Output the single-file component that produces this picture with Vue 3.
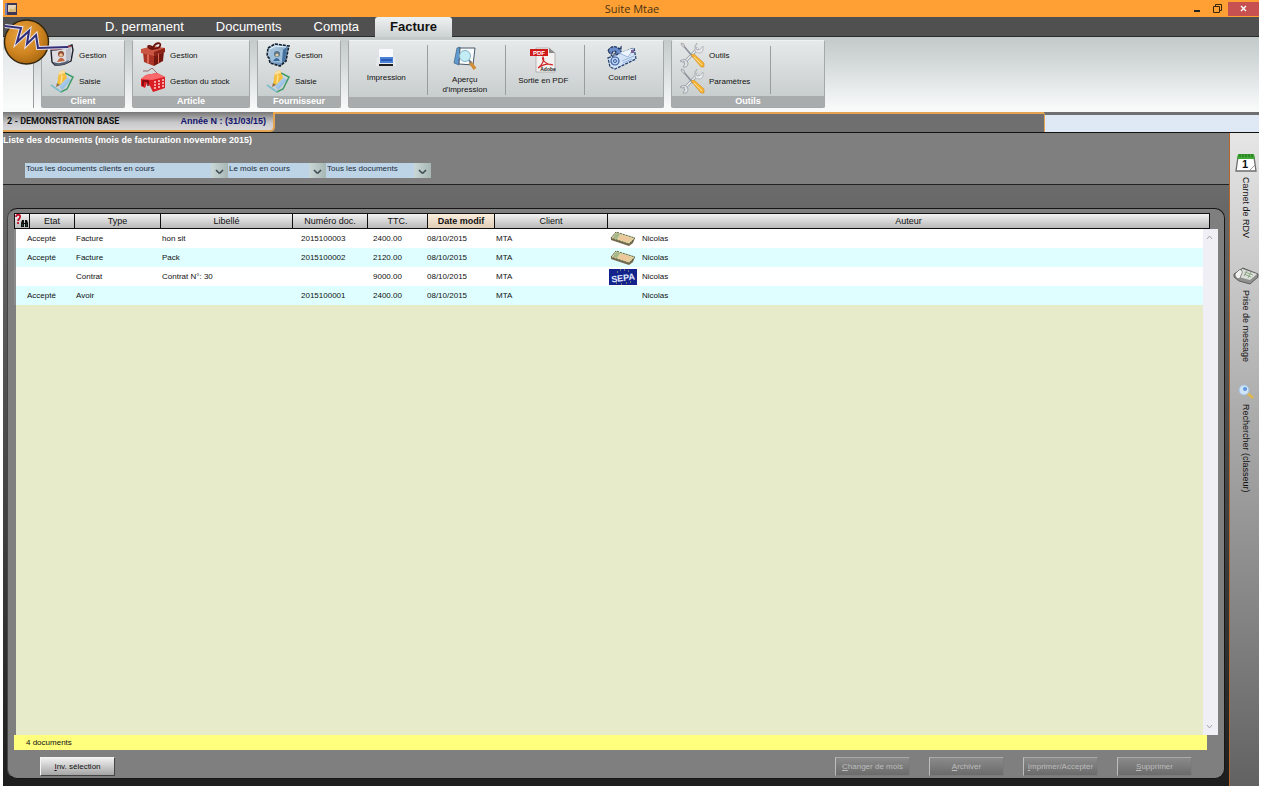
<script setup>
import { ref } from 'vue'

const tabs = ['D. permanent', 'Documents', 'Compta', 'Facture']
const activeTab = ref('Facture')

const smallGroups = [
  { title: 'Client', size: 'g-client', items: [{ icon: 'card', label: 'Gestion' }, { icon: 'pencil', label: 'Saisie' }] },
  { title: 'Article', size: 'g-article', items: [{ icon: 'gift', label: 'Gestion' }, { icon: 'stock', label: 'Gestion du stock' }] },
  { title: 'Fournisseur', size: 'g-client', items: [{ icon: 'safe', label: 'Gestion' }, { icon: 'pencil', label: 'Saisie' }] }
]

const filters = [
  { id: 'f-docs', size: 'w-docs', name: 'Clients', value: 'Tous les documents clients en cours' },
  { id: 'f-month', size: 'w-month', name: 'Période', value: 'Le mois en cours' },
  { id: 'f-type', size: 'w-type', name: 'Type de document', value: 'Tous les documents' }
]

const rows = [
  { etat: 'Accepté', type: 'Facture', lib: 'hon sit', num: '2015100003', ttc: '2400.00', date: '08/10/2015', client: 'MTA', pic: 'note', auteur: 'Nicolas' },
  { etat: 'Accepté', type: 'Facture', lib: 'Pack', num: '2015100002', ttc: '2120.00', date: '08/10/2015', client: 'MTA', pic: 'note', auteur: 'Nicolas' },
  { etat: '', type: 'Contrat', lib: 'Contrat N°: 30', num: '', ttc: '9000.00', date: '08/10/2015', client: 'MTA', pic: 'sepa', auteur: 'Nicolas' },
  { etat: 'Accepté', type: 'Avoir', lib: '', num: '2015100001', ttc: '2400.00', date: '08/10/2015', client: 'MTA', pic: '', auteur: 'Nicolas' }
]

const actions = [
  { key: 'C', rest: 'hanger de mois' },
  { key: 'A', rest: 'rchiver' },
  { key: 'I', rest: 'mprimer/Accepter' },
  { key: 'S', rest: 'upprimer' }
]
</script>

<template>
  <div class="window">
    <svg class="defs" width="0" height="0" aria-hidden="true">
      <defs>
        <radialGradient id="gold" cx="0.4" cy="0.35" r="0.7">
          <stop offset="0" stop-color="#e9a744" /><stop offset="0.6" stop-color="#cf8420" /><stop offset="1" stop-color="#a5650f" />
        </radialGradient>
        <linearGradient id="paper" x1="0" y1="0" x2="1" y2="1">
          <stop offset="0" stop-color="#e8f3fb" /><stop offset="1" stop-color="#6da6dd" />
        </linearGradient>
        <linearGradient id="steel" x1="0" y1="0" x2="1" y2="1">
          <stop offset="0" stop-color="#cfe4f2" /><stop offset="1" stop-color="#4a78a8" />
        </linearGradient>
        <symbol id="i-card" viewBox="0 0 26 26">
          <path d="M2 8 Q12 8 23 3 L24 8 L22 19 Q14 24 6 23 L3 20Z" fill="#dedde2" stroke="#22222c" stroke-width="1.4" />
          <path d="M17 7 L22 5 L22 17 L17 20Z" fill="#b9bec9" />
          <path d="M2 7 Q12 8 22 4" fill="none" stroke="#a8424a" stroke-width="1.4" />
          <circle cx="12" cy="12" r="3" fill="#8e4a2d" /><circle cx="12" cy="13" r="1.8" fill="#edc39d" />
          <path d="M8 20 Q12 12 16 19 Z" fill="#c0683f" /><path d="M4 20 Q12 23 20 18 L19 21 Q12 24 6 23Z" fill="#566074" />
        </symbol>
        <symbol id="i-safe" viewBox="0 0 26 26">
          <path d="M3 6 L10 2 L24 4 L23 8 L21 19 L15 24 L5 21 L4 16 L2 14Z" fill="url(#steel)" stroke="#14202f" stroke-width="1.6" stroke-dasharray="3 1" />
          <path d="M5 7 L18 8 L17 21 L6 19Z" fill="#9fc0da" />
          <path d="M18 8 L22 5 L20 18 L17 21Z" fill="#456f9c" />
          <circle cx="12" cy="12" r="3" fill="#5b7288" /><circle cx="12" cy="13" r="1.600" fill="#e1d0a0" />
          <path d="M8 19 Q12 13 15 19Z" fill="#3b6899" /><path d="M5 7 L10 4 L21 5" stroke="#e7f7ff" fill="none" />
        </symbol>
        <symbol id="i-pencil" viewBox="0 0 26 26">
          <path d="M6 13 L16 7 L22 12 L13 22Z" fill="url(#paper)" />
          <path d="M16 5 L24 9 L18 21 L12 24 L2 17" fill="none" stroke="#3f9b66" stroke-width="1.5" />
          <path d="M2 17 L12 24" stroke="#88c6e4" stroke-width="1.500" />
          <path d="M10 4 L15 2 L18 10 L11 17 L8 16Z" fill="#f6bd3c" /><path d="M10 4 L15 2 L16 5 L10 7Z" fill="#f7dfa0" />
          <path d="M13 7 L12 15" stroke="#fbe08c" stroke-width="1.6" /><path d="M8 15 L11 17 L7 19Z" fill="#8d7248" />
        </symbol>
        <symbol id="i-gift" viewBox="0 0 26 26">
          <path d="M3 10 L14 13 L14 24 L4 20Z" fill="#a93425" /><path d="M14 13 L24 9 L23 19 L14 24Z" fill="#74180f" />
          <path d="M1 7 L13 4 L25 6 L25 10 L14 14 L1 11Z" fill="#c95542" /><path d="M14 10 L25 6 L25 10 L14 14Z" fill="#8b2417" />
          <path d="M7 12 L9 13 L9 22 L7 21Z M18 12 L19 11 L19 21 L18 22Z" fill="#dd6a55" />
          <path d="M13 7 C5 6 8 1 13 6 C15 0 22 0 20 4 C19 7 16 6 13 7Z" fill="none" stroke="#6a120c" stroke-width="1.800" />
        </symbol>
        <symbol id="i-stock" viewBox="0 0 26 26">
          <path d="M3 3 L8 3 L12 0 L18 6" fill="none" stroke="#96686b" />
          <path d="M1 11 L6 7 L17 5 L25 9 L25 20 L13 24 L10 18 L7 15 L5 20 L1 18Z" fill="#db1d24" />
          <path d="M1 11 L6 7 L17 5 L25 9 L12 12Z" fill="#f9686a" /><path d="M3 18 V13 L8 13 L8 18" fill="none" stroke="#6d090d" stroke-width="1.400" />
          <path d="M14 14h2m2-1h2m2-1h2M14 17h2m2-1h2m2-1h2M14 20h2m2-1h2m2-1h2" stroke="#ffd1cf" stroke-width="1.600" />
        </symbol>
        <symbol id="i-tools" viewBox="0 0 26 26">
          <path d="M5 21 L19 6" stroke="#8e959d" stroke-width="2.8" /><path d="M5 21 L19 6" stroke="#eceff1" stroke-width="1.6" />
          <path d="M18 1 q-3 5 0 7 q3 1 6 -4 q1 6 -3 7 q-5 0 -5 -3 q-1 -5 2 -7z" fill="#e8eaec" stroke="#a3a8ae" stroke-width="0.7" />
          <path d="M1 19 q3 2 4 0 q2 3 -1 6 q5 1 5 -4 q-2 -5 -6 -3z" fill="#e1e4e7" stroke="#8b9199" stroke-width="0.7" />
          <path d="M3 2 L14 15" stroke="#8a9199" stroke-width="1.6" /><path d="M2 1 L5 2 L6 6 L3 4Z" fill="#d4d8dc" stroke="#888" stroke-width="0.5" />
          <path d="M12 13 L15 12 L25 21 L25 25 L22 25Z" fill="#f7b436" stroke="#cf8f2b" stroke-width="0.6" /><path d="M15 15 L23 23" stroke="#ffe29b" />
        </symbol>
        <symbol id="i-note" viewBox="0 0 28 16">
          <path d="M2 7 L7 1 L26 7 L24 12 L20 15 L2 9Z" fill="#76684e" /><path d="M2 7 L7 1 L26 7 L20 13Z" fill="#e2cf9f" stroke="#4f6348" stroke-width="0.9" stroke-dasharray="2 1" />
          <path d="M7 2 L11 3 L8 8 L4 7Z" fill="#a3b88c" /><path d="M13 5 L21 7 L17 11 L10 8Z" fill="#eec69b" />
        </symbol>
        <symbol id="i-sepa" viewBox="0 0 28 16">
          <rect width="28" height="16" fill="#12248c" />
          <path d="M8 3h1M11 1h1M15 1h1M19 2h1M21 13h1M17 14h1M12 15h1M7 14h1" stroke="#d4c76a" />
          <text x="14" y="12" transform="rotate(-7 14 8)" text-anchor="middle" font-family="Liberation Sans, sans-serif" font-size="9" font-weight="bold" fill="#e4e9ff">SEPA</text>
        </symbol>
      </defs>
    </svg>

    <header class="titlebar">
      <svg class="app-icon" viewBox="0 0 12 12" width="12" height="12" aria-hidden="true">
        <rect width="12" height="12" fill="#3c3557" /><rect x="3" y="2" width="8" height="7" fill="#e5d7b5" />
        <path d="M3 9 L6 5 L8 7 L11 3 V9Z" fill="#d9b878" /><path d="M0 0H2V12H0Z" fill="#7b83b5" />
      </svg>
      <h1>Suite Mtae</h1>
      <div class="controls">
        <button type="button" aria-label="Réduire"><svg width="8" height="8"><rect x="1" y="5" width="6" height="2" fill="#222" /></svg></button>
        <button type="button" aria-label="Restaurer"><svg width="9" height="9"><path d="M2.500 2.500V.5H8.500V6.500H6.500M.5 2.500H6.500V8.500H.5Z" fill="none" stroke="#3a2705" /></svg></button>
        <button type="button" class="close" aria-label="Fermer"><svg width="7" height="7"><path d="M1 1L6 6M6 1L1 6" stroke="#fff" stroke-width="1.400" /></svg></button>
      </div>
    </header>

    <nav class="menu">
      <button v-for="t in tabs" :key="t" type="button" :class="{ active: t === activeTab }" @click="activeTab = t">{{ t }}</button>
    </nav>

    <svg class="logo" viewBox="0 0 70 50" width="70" height="50" aria-hidden="true">
      <circle cx="24.500" cy="25" r="22" fill="url(#gold)" stroke="#33260f" stroke-width="1.400" />
      <path d="M3 9 L19 11 L15 25 L27 14 L25 27 L34 18 L36 31 L66 30" fill="none" stroke="#e6e3ee" stroke-width="4" />
      <path d="M3 9 L19 11 L15 25 L27 14 L25 27 L34 18 L36 31 L66 30" fill="none" stroke="#322f78" stroke-width="2" />
    </svg>

    <section class="ribbon">
      <div class="edge"></div>
      <section v-for="g in smallGroups" :key="g.title" class="group" :class="g.size">
        <div class="pair">
          <button v-for="i in g.items" :key="i.label" type="button" class="small">
            <svg width="26" height="26" aria-hidden="true"><use :href="'#i-' + i.icon" /></svg><span>{{ i.label }}</span>
          </button>
        </div>
        <h2>{{ g.title }}</h2>
      </section>

      <section class="group g-print">
        <div class="bigs">
          <button type="button" class="big">
            <svg width="26" height="26" viewBox="0 0 26 26" aria-hidden="true">
              <path d="M6 4H20V13H6Z" fill="#f9fbfe" /><path d="M4 12H22L23 21H3Z" fill="#e6e9ed" />
              <rect x="7" y="12" width="13" height="6" fill="#4a7fd6" /><rect x="8" y="14" width="11" height="2" fill="#2b5cb5" /><rect x="6" y="19" width="14" height="2" fill="#1d1d1d" />
            </svg><span>Impression</span>
          </button>
          <button type="button" class="big">
            <svg width="26" height="28" viewBox="0 0 26 28" aria-hidden="true">
              <path d="M5 3L8 2L7 20L2 18Z" fill="#5f9bd0" stroke="#3c607f" stroke-width="0.7" />
              <path d="M8 3H23L21 20L7 19Z" fill="#f9fbfd" stroke="#47586a" />
              <circle cx="13" cy="11" r="5.500" fill="#c4ecf5" stroke="#84b4ca" /><path d="M18 17L23 24" stroke="#d28d35" stroke-width="3.400" /><path d="M17 15L19 18" stroke="#6c7f8e" stroke-width="2" />
            </svg><span>Aperçu<br>d'impression</span>
          </button>
          <button type="button" class="big pdf">
            <svg width="28" height="28" viewBox="0 0 28 28" aria-hidden="true">
              <path d="M7 3H20L26 8V27H7Z" fill="#f4f2f1" stroke="#aaa6a4" stroke-width="0.8" /><path d="M20 3V8H26" fill="#8d8987" />
              <rect x="1" y="4" width="18" height="7" fill="#d01b1b" /><text x="10" y="10" text-anchor="middle" class="svg-pdf">PDF</text>
              <path d="M9 23C13 20 16 15 14 12C12 15 18 20 24 20C19 18 13 20 9 23" fill="none" stroke="#cf2727" stroke-width="1.200" />
              <text x="19" y="26" text-anchor="middle" class="svg-adobe">Adobe</text>
            </svg><span>Sortie en PDF</span>
          </button>
          <button type="button" class="big">
            <svg width="32" height="26" viewBox="0 0 32 26" aria-hidden="true">
              <path d="M2 6C4 1 10 0 13 4L15 2L15 9H8L10 7C8 5 5 7 6 11Z" fill="#6a8ccb" stroke="#1f3259" stroke-width="1.200" stroke-dasharray="3 1" />
              <path d="M2 13L28 3L30 14L9 24L4 22Z" fill="#d3e4f9" stroke="#27426f" stroke-width="1.300" stroke-dasharray="3 1" />
              <path d="M13 8L22 12L28 3" fill="#edf4fd" stroke="#8ea8d2" stroke-width="0.800" /><path d="M16 16L28 11M17 18L26 14" stroke="#8ba6d2" stroke-width="0.800" /><rect x="25" y="5" width="3" height="3" fill="#7d5f9a" />
              <circle cx="9" cy="16" r="4" fill="#bcd4f4" stroke="#375a9e" stroke-width="1.200" /><circle cx="9" cy="16" r="1.500" fill="none" stroke="#375a9e" />
            </svg><span>Courriel</span>
          </button>
        </div>
        <h2></h2>
      </section>

      <section class="group g-tools">
        <div class="pair bordered">
          <button v-for="l in ['Outils', 'Paramètres']" :key="l" type="button" class="small">
            <svg width="26" height="26" aria-hidden="true"><use href="#i-tools" /></svg><span>{{ l }}</span>
          </button>
        </div>
        <h2>Outils</h2>
      </section>
    </section>

    <div class="context">
      <div class="base"><strong class="name">2 - DEMONSTRATION BASE</strong><strong class="year">Année N : (31/03/15)</strong></div>
      <div class="band"></div>
      <div class="blank"></div>
    </div>

    <div class="workspace">
      <main class="content">
        <div class="head">
          <h2>Liste des documents (mois de facturation novembre 2015)</h2>
          <div class="filters">
            <div v-for="f in filters" :key="f.id" class="filter" :class="f.size">
              <select :id="f.id" :aria-label="f.name"><option>{{ f.value }}</option></select>
              <svg width="9" height="6" viewBox="0 0 9 6" aria-hidden="true"><path d="M1 1L4 4H5L8 1" fill="none" stroke="#3c4a50" stroke-width="1.600" /></svg>
            </div>
          </div>
        </div>

        <div class="stage">
          <div class="panel">
            <div class="list">
              <table>
                <colgroup>
                  <col class="c-find"><col class="c-etat"><col class="c-type"><col class="c-lib"><col class="c-num"><col class="c-ttc"><col class="c-date"><col class="c-client"><col>
                </colgroup>
                <thead>
                  <tr>
                    <th class="find">
                      <svg width="14" height="14" viewBox="0 0 14 14" aria-label="Rechercher">
                        <path d="M1 3C1 0 6 0 5 3C5 5 3 5 3 7M3 8V10" fill="none" stroke="#c3132b" stroke-width="1.800" />
                        <path d="M6 13V9L7 6H9V9H10V6H12L13 9V13H10V10H9V13Z" fill="#111" /><path d="M7 11H8M11 11H12" stroke="#2c8a7d" />
                      </svg>
                    </th>
                    <th>Etat</th><th>Type</th><th>Libellé</th><th>Numéro doc.</th><th>TTC.</th><th class="sorted">Date modif</th><th>Client</th><th>Auteur</th>
                  </tr>
                </thead>
                <tbody>
                  <tr v-for="(r, i) in rows" :key="i">
                    <td colspan="2" class="t-etat">{{ r.etat }}</td>
                    <td>{{ r.type }}</td>
                    <td>{{ r.lib }}</td>
                    <td class="t-num">{{ r.num }}</td>
                    <td class="t-ttc">{{ r.ttc }}</td>
                    <td class="t-date">{{ r.date }}</td>
                    <td>{{ r.client }}</td>
                    <td>
                      <div class="author">
                        <span class="pic"><svg v-if="r.pic" width="28" height="16" aria-hidden="true"><use :href="'#i-' + r.pic" /></svg></span>{{ r.auteur }}
                      </div>
                    </td>
                  </tr>
                </tbody>
              </table>
              <div class="scroll" aria-hidden="true">
                <svg width="7" height="5"><path d="M1 4L3.500 1L6 4" fill="none" stroke="#a5a5ac" /></svg>
                <svg width="7" height="5"><path d="M1 1L3.500 4L6 1" fill="none" stroke="#a5a5ac" /></svg>
              </div>
            </div>
            <div class="count">4 documents</div>
            <div class="buttons">
              <button type="button"><u>I</u>nv. sélection</button>
              <div class="right">
                <button v-for="a in actions" :key="a.rest" type="button" disabled><u>{{ a.key }}</u>{{ a.rest }}</button>
              </div>
            </div>
          </div>
        </div>
      </main>

      <aside class="side">
        <button type="button">
          <svg width="22" height="20" viewBox="0 0 22 20" aria-hidden="true">
            <path d="M3 4H19L21 18H1Z" fill="#fff" stroke="#6e6e6e" stroke-width="1.300" /><path d="M3 1H19L20 6H2Z" fill="#3fa535" />
            <path d="M5 1V4M8 1V4M11 1V4M14 1V4M17 1V4" stroke="#1d6a19" /><path d="M15 17L20 12" stroke="#9a9a9a" />
            <text x="10" y="15" text-anchor="middle" class="svg-day">1</text>
          </svg><span>Carnet de RDV</span>
        </button>
        <button type="button">
          <svg width="26" height="20" viewBox="0 0 26 20" aria-hidden="true">
            <path d="M1 8L10 2L25 8V11L17 18L6 15L1 11Z" fill="#8f918e" stroke="#4c4d4b" stroke-width="0.800" />
            <path d="M9 3L24 8L17 14L6 11Z" fill="#dde0da" /><path d="M2 8L6 4C8 3 10 5 9 7L7 12C6 14 2 12 2 8Z" fill="#f1f2ef" stroke="#60615f" stroke-width="0.700" />
            <path d="M12 6L20 9M11 8L18 11M14 5L11 10M18 6L15 12" stroke="#7b9c76" stroke-width="0.800" />
          </svg><span>Prise de message</span>
        </button>
        <button type="button">
          <svg width="18" height="16" viewBox="0 0 18 16" aria-hidden="true">
            <path d="M10 9L16 14" stroke="#e3b748" stroke-width="2.500" /><circle cx="7" cy="6" r="5" fill="#cfe4f8" stroke="#a5c2de" /><circle cx="8" cy="5" r="2" fill="#5d97dc" />
          </svg><span>Rechercher (classeur)</span>
        </button>
      </aside>
    </div>
  </div>
</template>

<style>
html, body { background: #fff; }
</style>

<style scoped>
.window { position: relative; display: flex; flex-direction: column; box-sizing: border-box; min-height: 100vh; padding: 0 2px 1px 3px; background: #fff; font-family: "Liberation Sans", Arial, sans-serif; font-size: 9px; color: #111; }
.defs { position: absolute; }
button { margin: 0; padding: 0; border: 0; background: none; font-family: inherit; font-size: inherit; color: inherit; cursor: pointer; }
h1, h2 { margin: 0; }

.titlebar { display: grid; grid-template-columns: 1fr auto 1fr; align-items: center; height: 17px; padding-left: 2px; background: #fea033; }
.titlebar h1 { font: 400 11px/17px "Open Sans", sans-serif; color: #4a3212; }
.controls { display: flex; justify-content: flex-end; }
.controls button { display: flex; align-items: center; justify-content: center; width: 20px; height: 14px; }
.controls .close { width: 31px; margin-left: 1px; background: #c75050; }

.menu { display: flex; align-items: stretch; height: 20px; padding-left: 86px; background: #505050; border-bottom: 1px solid #2b2b2b; box-sizing: border-box; }
.menu button { padding: 0 16px; font-size: 13px; line-height: 20px; color: #fff; }
.menu .active { height: 20px; padding: 0 15px; font-weight: 700; color: #111; background: linear-gradient(#eef1f1, #cdd2d2); border-radius: 3px 3px 0 0; }

.logo { position: absolute; left: 2px; top: 17px; z-index: 2; }

.ribbon { display: flex; gap: 7px; height: 75px; padding: 3px 0 4px; box-sizing: border-box; background: linear-gradient(#c3c8c8, #d4d9d9 35%, #f8fafa 95%); }
.edge { width: 31px; box-sizing: border-box; border-right: 1px solid #9a9e9e; margin-top: 10px; background: linear-gradient(#e4e8e8, #fafbfb); }
.group { display: flex; flex-direction: column; box-sizing: border-box; border: 1px solid #a4a8a8; border-top-color: #f1f3f3; border-radius: 2px; background: linear-gradient(#e6e9e9, #c3c8c9); }
.group h2 { height: 11px; font-size: 9px; line-height: 11px; text-align: center; color: #fff; background: #a9acac; }
.g-client { width: 84px; }
.g-article { width: 118px; }
.g-print { width: 316px; }
.g-tools { width: 154px; }
.pair { flex: 1; display: flex; flex-direction: column; }
.small { display: flex; align-items: center; gap: 4px; height: 26px; margin-top: 1px; padding-left: 7px; font-size: 8px; text-align: left; }
.small + .small { margin-top: 0; }
.bordered { width: 98px; border-right: 1px solid #999d9d; margin: 5px 0 2px; }
.bordered .small { margin-top: -4px; }
.bordered .small + .small { margin-top: 0; }
.bigs { flex: 1; display: grid; grid-template-columns: repeat(4, 1fr); padding: 4px 0 2px; }
.big { display: flex; flex-direction: column; align-items: center; justify-content: flex-start; gap: 2px; padding-right: 3px; border-right: 1px solid #999d9d; font-size: 8px; line-height: 10px; }
.big.pdf { gap: 3px; }
.big:last-child { border-right: 0; }

.context { display: flex; height: 20px; border-bottom: 1px solid #111; background: #6f6f6f; }
.base { display: flex; justify-content: space-between; align-items: center; box-sizing: border-box; width: 272px; padding: 0 7px 0 4px; font-size: 9px; border: solid #e5a452; border-width: 0 2px 2px 0; border-bottom-right-radius: 5px; background: linear-gradient(#777, #c9c9cb 60%, #d8d8da); }
.name { font-family: Roboto, "Liberation Sans", sans-serif; }
.year { color: #14146e; }
.band { flex: 770; border-top: 2px solid #e5a452; background: #6f6f6f; }
.blank { flex: 214; border-top: 3px solid #6f6f6f; border-left: 1px solid #e5a452; background: #dfe9f5; }

.workspace { flex: 1; display: flex; background: #1e1e1e; }
.content { flex: 1; display: flex; flex-direction: column; min-width: 0; }
.head { height: 51px; border-bottom: 1px solid #222; background: #7f7f7f; }
.head h2 { height: 14px; font-size: 9px; line-height: 14px; color: #fff; white-space: nowrap; }
.filters { display: flex; margin: 16px 0 0 22px; }
.filter { position: relative; height: 15px; }
.w-docs { width: 203px; }
.w-month { width: 98px; }
.w-type { width: 105px; }
.filter select { display: block; width: 100%; height: 15px; padding: 0 0 3px 1px; border: 0; border-radius: 0; appearance: none; background: linear-gradient(90deg, #c9d8d6, #a7b7b4) right / 17px 100% no-repeat #bcd4e6; font-family: inherit; font-size: 8px; line-height: 12px; color: #1b2b3b; }
.filter svg { position: absolute; right: 4px; top: 6px; pointer-events: none; }

.stage { flex: 1; display: flex; padding: 23px 4px 7px; background: linear-gradient(#6b6b6b, #1e1e1e); }
.panel { flex: 1; display: flex; flex-direction: column; box-sizing: border-box; padding: 4px 6px 2px; border: 1px solid #161616; border-left-color: #444; border-radius: 10px; background: #7f7f7f; }
.list { position: relative; flex: 1; background: linear-gradient(#e8ebca, #e8ebca) 2px 16px no-repeat; }
table { width: calc(100% - 8px); table-layout: fixed; border-collapse: separate; border-spacing: 0; }
.c-find { width: 15px; }
.c-etat { width: 45px; }
.c-type { width: 86px; }
.c-lib { width: 132px; }
.c-num { width: 75px; }
.c-ttc { width: 60px; }
.c-date { width: 67px; }
.c-client { width: 113px; }
th { height: 16px; box-sizing: border-box; padding: 0; border: solid #111; border-width: 1px 0 1px 1px; font-size: 9px; font-weight: 400; line-height: 14px; background: linear-gradient(#f2f2f2, #b9b9b9); background-clip: padding-box; }
th:last-child { border-right: 1px solid #111; }
th.sorted { font-weight: 700; background: linear-gradient(#fbeedd, #e0cdb6); }
.find svg { display: block; }
td { height: 19px; padding: 0 0 0 2px; font-size: 8px; line-height: 19px; white-space: nowrap; background: #fff; }
tbody tr:nth-child(even) td { background: #defeff; }
td.t-etat { padding-left: 11px; border-left: 2px solid #8b8b8b; }
td.t-num { padding-left: 9px; }
td.t-ttc { padding-left: 6px; }
td.t-date { padding-left: 0; }
.author { display: flex; align-items: center; height: 19px; }
.pic { display: flex; width: 33px; }
.scroll { position: absolute; top: 16px; right: 0; bottom: 0; display: flex; flex-direction: column; justify-content: space-between; align-items: center; box-sizing: border-box; width: 15px; padding: 6px 2px 6px 0; background: #efeff5; }
.count { margin-right: 11px; padding-left: 12px; font-size: 8px; line-height: 15px; background: #ffff7d; }
.buttons { display: flex; justify-content: space-between; padding: 7px 26px 0 26px; }
.buttons button { width: 75px; height: 19px; border: 1px solid; border-color: #f4f4f4 #444 #444 #f4f4f4; font-size: 8px; background: linear-gradient(#f0f0f0, #a5a5a5); }
.right { display: flex; gap: 19px; }
.right button { border-color: #a9a9a9 #7b7b7b #7b7b7b #bdbdbd; color: #bcbcbc; background: linear-gradient(#8a8a8a, #6b6b6b); cursor: default; }

.side { display: flex; flex-direction: column; align-items: center; box-sizing: border-box; width: 30px; padding: 20px 0 0 3px; border-left: 1px solid #b4652e; background: linear-gradient(#e6e6e6, #a9a9a9 45%, #626262); }
.side button { display: flex; flex-direction: column; align-items: center; gap: 4px; margin-bottom: 28px; }
.side button + button { margin-bottom: 22px; }
.side span { writing-mode: vertical-rl; font-size: 9px; line-height: 12px; }
.svg-pdf { font: 700 6px "Liberation Sans", sans-serif; fill: #fff; }
.svg-adobe { font: 700 5px "Liberation Sans", sans-serif; fill: #222; }
.svg-day { font: 700 11px "Liberation Sans", sans-serif; fill: #111; }
</style>
